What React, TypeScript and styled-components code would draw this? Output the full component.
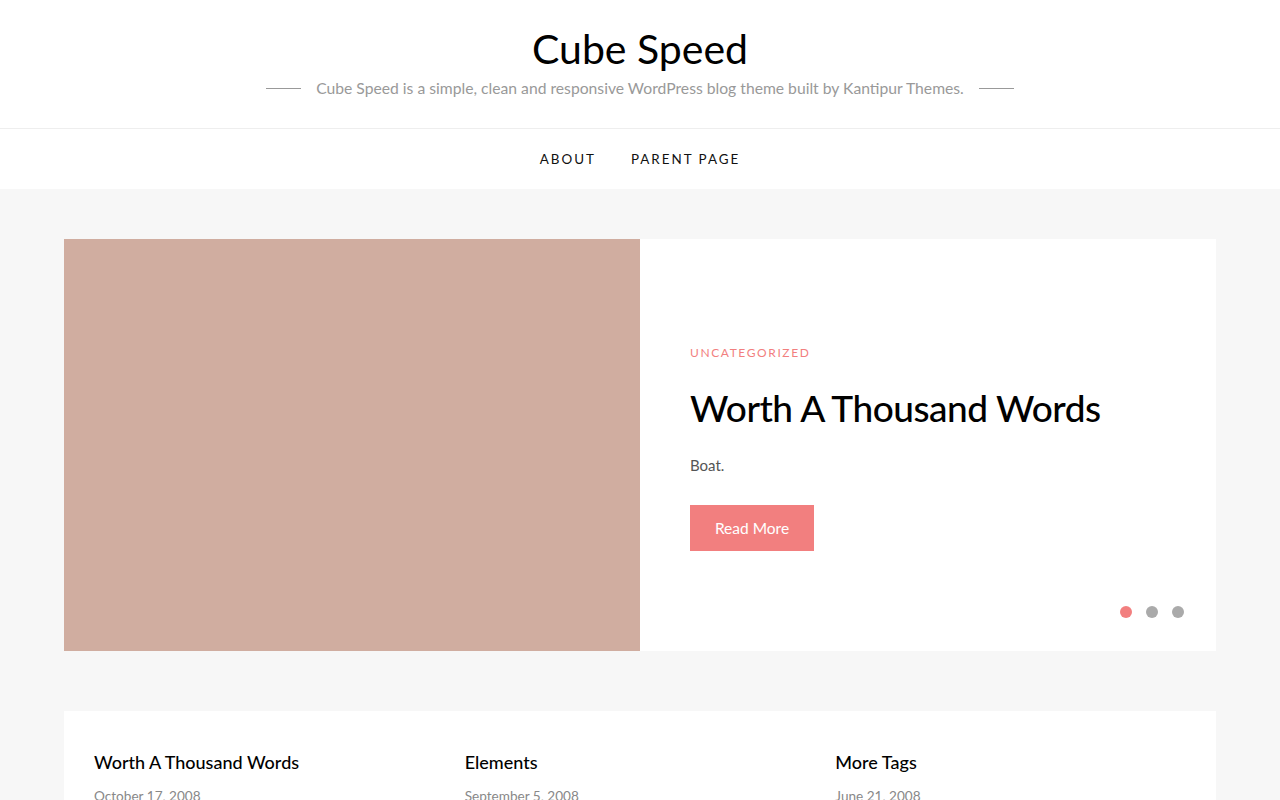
import React from 'react';
import styled, { createGlobalStyle } from 'styled-components';

const GlobalStyle = createGlobalStyle`
  html, body {
    margin: 0;
    padding: 0;
    background: #f7f7f7;
    font-family: Lato, "Liberation Sans", sans-serif;
    color: #222;
  }
  * { box-sizing: border-box; }
`;

interface RecentPost {
  title: string;
  date: string;
}

const recent: RecentPost[] = [
  { title: 'Worth A Thousand Words', date: 'October 17, 2008' },
  { title: 'Elements', date: 'September 5, 2008' },
  { title: 'More Tags', date: 'June 21, 2008' },
];

function App() {
  return (
    <>
      <GlobalStyle />
      <Header>
        <SiteTitle>Cube Speed</SiteTitle>
        <Tagline>
          <Rule />
          <span>Cube Speed is a simple, clean and responsive WordPress blog theme built by Kantipur Themes.</span>
          <Rule />
        </Tagline>
      </Header>
      <Nav>
        <NavLink href="#">About</NavLink>
        <NavLink href="#">Parent Page</NavLink>
      </Nav>
      <Main>
        <Slider>
          <SlideImage />
          <SlideBody>
            <Category>Uncategorized</Category>
            <SlideTitle>Worth A Thousand Words</SlideTitle>
            <Excerpt>Boat.</Excerpt>
            <ReadMore href="#">Read More</ReadMore>
            <Dots>
              <Dot active />
              <Dot />
              <Dot />
            </Dots>
          </SlideBody>
        </Slider>
        <PostGrid>
          {recent.map((post) => (
            <PostCard key={post.title}>
              <PostTitle>{post.title}</PostTitle>
              <PostDate>{post.date}</PostDate>
            </PostCard>
          ))}
        </PostGrid>
      </Main>
    </>
  );
}

const Header = styled.header`
  background: #fff;
  height: 128px;
  padding-top: 24px;
  display: flex;
  flex-direction: column;
  align-items: center;
`

const SiteTitle = styled.h1`
  margin: 0;
  font-size: 41px;
  font-weight: 400;
  line-height: 50px;
  color: #000;
`

const Tagline = styled.p`
  margin: 2px 0 0;
  display: flex;
  align-items: center;
  gap: 15px;
  font-size: 15.7px;
  line-height: 24px;
  color: #999;
`

const Rule = styled.i`
  display: block;
  width: 35px;
  height: 1px;
  background: #999;
`

const Nav = styled.nav`
  background: #fff;
  border-top: 1px solid #eee;
  height: 61px;
  display: flex;
  justify-content: center;
  align-items: center;
  gap: 35px;
`

const NavLink = styled.a`
  font-size: 13.4px;
  letter-spacing: 2px;
  text-transform: uppercase;
  color: #111;
  text-decoration: none;
`

const Main = styled.main`
  padding: 50px 64px 0;
`

const Slider = styled.section`
  display: grid;
  grid-template-columns: 1fr 1fr;
  height: 412px;
  background: #fff;
`

const SlideImage = styled.div`
  background: #d0ada0;
`

const SlideBody = styled.div`
  position: relative;
  padding: 6px 50px 0;
  display: flex;
  flex-direction: column;
  justify-content: center;
  align-items: flex-start;
`

const Category = styled.span`
  font-size: 12px;
  line-height: 16px;
  letter-spacing: 1.6px;
  text-transform: uppercase;
  color: #f27f7f;
`

const SlideTitle = styled.h2`
  margin: 21px 0 0;
  font-size: 37px;
  font-weight: 500;
  letter-spacing: -0.5px;
  line-height: 52px;
  color: #000;
`

const Excerpt = styled.p`
  margin: 19px 0 0;
  font-size: 15px;
  line-height: 24px;
  color: #555;
`

const ReadMore = styled.a`
  margin-top: 28px;
  width: 124px;
  height: 46px;
  display: flex;
  align-items: center;
  justify-content: center;
  background: #f27f7f;
  color: #fff;
  font-size: 15.5px;
  text-decoration: none;
`

const Dots = styled.div`
  position: absolute;
  right: 32px;
  bottom: 33px;
  display: flex;
  gap: 14px;
`

const Dot = styled.span<{ active?: boolean }>`
  width: 12px;
  height: 12px;
  border-radius: 50%;
  background: ${(p) => (p.active ? '#f27f7f' : '#aaa')};
`

const PostGrid = styled.section`
  margin-top: 60px;
  background: #fff;
  padding: 38px 30px 40px;
  display: grid;
  grid-template-columns: repeat(3, 1fr);
  gap: 0 20px;
`

const PostCard = styled.article``

const PostTitle = styled.h3`
  margin: 0;
  font-size: 18px;
  font-weight: 500;
  line-height: 26px;
  color: #000;
`

const PostDate = styled.p`
  margin: 13px 0 0;
  font-size: 13.6px;
  color: #888;
`

export default App;
